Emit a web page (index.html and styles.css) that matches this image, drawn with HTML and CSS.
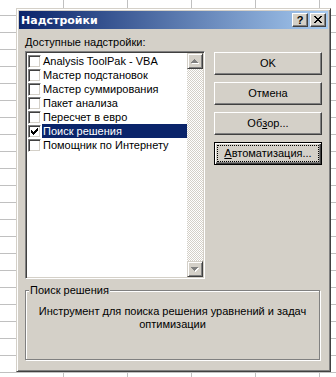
FILE: index.html
```html
<!DOCTYPE html>
<html lang="ru">
  <head>
    <meta charset="UTF-8" />
    <title>Надстройки</title>
    <link rel="stylesheet" href="styles.css">
  </head>
  <body>
    <div class="dialog">
      <div class="dialog_title">
        <span class="dialog_title-text">Надстройки</span>
        <div class="dialog_title-buttons">
          <span class="caption-btn caption-btn--help">?</span>
          <span class="caption-btn">
            <svg width="14" height="12" viewBox="0 0 14 12">
              <path d="M3 2h2v1H3zM9 2h2v1H9zM4 3h2v1H4zM8 3h2v1H8zM5 4h4v1H5zM6 5h2v1H6zM5 6h4v1H5zM4 7h2v1H4zM8 7h2v1H8zM3 8h2v1H3zM9 8h2v1H9z" fill="#000"/>
            </svg>
          </span>
        </div>
      </div>

      <div class="dialog_body">
        <div class="dialog_main">
          <div class="addins">
            <div class="addins_label"><u>Д</u>оступные надстройки:</div>
            <div class="listbox">
              <ul class="listbox_items">
                <li class="listbox_item"><span class="check"></span><span class="listbox_text">Analysis ToolPak - VBA</span></li>
                <li class="listbox_item"><span class="check"></span><span class="listbox_text">Мастер подстановок</span></li>
                <li class="listbox_item"><span class="check"></span><span class="listbox_text">Мастер суммирования</span></li>
                <li class="listbox_item"><span class="check"></span><span class="listbox_text">Пакет анализа</span></li>
                <li class="listbox_item"><span class="check"></span><span class="listbox_text">Пересчет в евро</span></li>
                <li class="listbox_item is-selected">
                  <span class="check">
                    <svg width="11" height="11" viewBox="0 0 11 11">
                      <path d="M2 4h1v3H2zM3 5h1v3H3zM4 6h1v3H4zM5 5h1v3H5zM6 4h1v3H6zM7 3h1v3H7zM8 2h1v3H8z" fill="#000"/>
                    </svg>
                  </span>
                  <span class="listbox_text">Поиск решения</span>
                </li>
                <li class="listbox_item"><span class="check"></span><span class="listbox_text">Помощник по Интернету</span></li>
              </ul>
              <div class="scrollbar">
                <div class="scrollbar_btn">
                  <svg width="14" height="14" viewBox="0 0 14 14">
                    <path d="M7 6h1v1H7zM6 7h3v1H6zM5 8h5v1H5zM4 9h7v1H4z" fill="#fff"/>
                    <path d="M6 5h1v1H6zM5 6h3v1H5zM4 7h5v1H4zM3 8h7v1H3z" fill="#808080"/>
                  </svg>
                </div>
                <div class="scrollbar_track"></div>
                <div class="scrollbar_btn">
                  <svg width="14" height="14" viewBox="0 0 14 14">
                    <path d="M4 6h7v1H4zM5 7h5v1H5zM6 8h3v1H6zM7 9h1v1H7z" fill="#fff"/>
                    <path d="M3 5h7v1H3zM4 6h5v1H4zM5 7h3v1H5zM6 8h1v1H6z" fill="#808080"/>
                  </svg>
                </div>
              </div>
            </div>
          </div>

          <div class="actions">
            <div class="btn">OK</div>
            <div class="btn">Отмена</div>
            <div class="btn">Об<u>з</u>ор...</div>
            <div class="btn btn--default"><span class="btn_focus"><u>А</u>втоматизация...</span></div>
          </div>
        </div>

        <div class="groupbox">
          <span class="groupbox_title">Поиск решения</span>
          <p class="groupbox_text">Инструмент для поиска решения уравнений и задач<br>оптимизации</p>
        </div>
      </div>
    </div>
  </body>
</html>
```

FILE: styles.css
```css
html,
body {
  margin: 0;
  height: 377px;
  overflow: hidden;
}

body {
  background-color: #fff;
  background-image: linear-gradient(to right, #c0c0c0 1px, transparent 1px),
    linear-gradient(to bottom, #c0c0c0 1px, transparent 1px);
  background-size: 64px 17px;
  background-position: 63px 0, 0 15px;
  font-family: "Liberation Sans", sans-serif;
  font-size: 11px;
  line-height: 13px;
  color: #000;
}

u {
  text-decoration: underline;
  text-underline-offset: 1px;
}

.dialog {
  box-sizing: border-box;
  width: 315px;
  height: 364px;
  margin: 8px 0 0 16px;
  padding: 2px;
  background-color: #d4d0c8;
  border: 1px solid;
  border-color: #d4d0c8 #404040 #404040 #d4d0c8;
  box-shadow: inset 1px 1px #fff, inset -1px -1px #808080;
  display: flex;
  flex-direction: column;
}

.dialog_title {
  height: 18px;
  flex: none;
  display: flex;
  align-items: center;
  justify-content: space-between;
  padding: 0 2px;
  background: linear-gradient(to right, #0a246a, #a6caf0);
}

.dialog_title-text {
  color: #fff;
  font-family: "DejaVu Sans", sans-serif;
  font-weight: bold;
  font-size: 11px;
}

.dialog_title-buttons {
  display: flex;
  gap: 2px;
}

.caption-btn {
  box-sizing: border-box;
  width: 16px;
  height: 14px;
  background-color: #d4d0c8;
  border: 1px solid;
  border-color: #fff #404040 #404040 #fff;
  box-shadow: inset -1px -1px #808080;
  display: flex;
  align-items: center;
  justify-content: center;
}

.caption-btn--help {
  font-weight: bold;
  font-size: 11px;
  line-height: 12px;
}

.dialog_body {
  flex: 1;
  padding: 7px 5px 0 6px;
}

.dialog_main {
  display: flex;
}

.addins_label {
  height: 13px;
}

.listbox {
  box-sizing: border-box;
  width: 180px;
  height: 228px;
  margin-top: 2px;
  background-color: #fff;
  border: 1px solid;
  border-color: #808080 #fff #fff #808080;
  box-shadow: inset 1px 1px #404040, inset -1px -1px #d4d0c8;
  padding: 1px;
  display: flex;
}

.listbox_items {
  flex: 1;
  list-style: none;
  margin: 0;
  padding: 1px 0 0 1px;
}

.listbox_item {
  height: 14px;
  display: flex;
  align-items: center;
}

.check {
  box-sizing: border-box;
  width: 13px;
  height: 13px;
  margin-right: 1px;
  background-color: #fff;
  border: 1px solid;
  border-color: #808080 #fff #fff #808080;
  box-shadow: inset 1px 1px #404040, inset -1px -1px #d4d0c8;
  display: flex;
}

.check svg {
  display: block;
}

.listbox_text {
  flex: 1;
  height: 14px;
  padding-left: 1px;
  line-height: 14px;
  white-space: nowrap;
}

.is-selected .listbox_text {
  background-color: #0a246a;
  color: #fff;
}

.scrollbar {
  width: 16px;
  display: flex;
  flex-direction: column;
}

.scrollbar_btn {
  box-sizing: border-box;
  width: 16px;
  height: 16px;
  background-color: #d4d0c8;
  border: 1px solid;
  border-color: #d4d0c8 #404040 #404040 #d4d0c8;
  box-shadow: inset 1px 1px #fff, inset -1px -1px #808080;
}

.scrollbar_btn svg {
  display: block;
}

.scrollbar_track {
  flex: 1;
  background-image: conic-gradient(#fff 25%, #d4d0c8 0 50%, #fff 0 75%, #d4d0c8 0);
  background-size: 2px 2px;
}

.actions {
  margin-left: 9px;
  padding-top: 16px;
  display: flex;
  flex-direction: column;
  gap: 7px;
}

.btn {
  box-sizing: border-box;
  width: 108px;
  height: 23px;
  background-color: #d4d0c8;
  border: 1px solid;
  border-color: #fff #404040 #404040 #fff;
  box-shadow: inset -1px -1px #808080;
  display: flex;
  align-items: center;
  justify-content: center;
}

.btn--default {
  border-color: #000;
  box-shadow: inset 1px 1px #fff, inset -1px -1px #404040, inset -2px -2px #808080;
  padding: 3px;
}

.btn_focus {
  box-sizing: border-box;
  flex: 1;
  height: 15px;
  outline: 1px dotted #000;
  text-align: center;
  line-height: 15px;
}

.groupbox {
  position: relative;
  box-sizing: border-box;
  width: 295px;
  height: 70px;
  margin-top: 11px;
  border: 1px solid #808080;
  box-shadow: inset 1px 1px #fff, 1px 1px #fff;
}

.groupbox_title {
  position: absolute;
  top: -7px;
  left: 3px;
  padding: 0 1px;
  background-color: #d4d0c8;
}

.groupbox_text {
  margin: 0;
  padding-top: 14px;
  text-align: center;
}
```
